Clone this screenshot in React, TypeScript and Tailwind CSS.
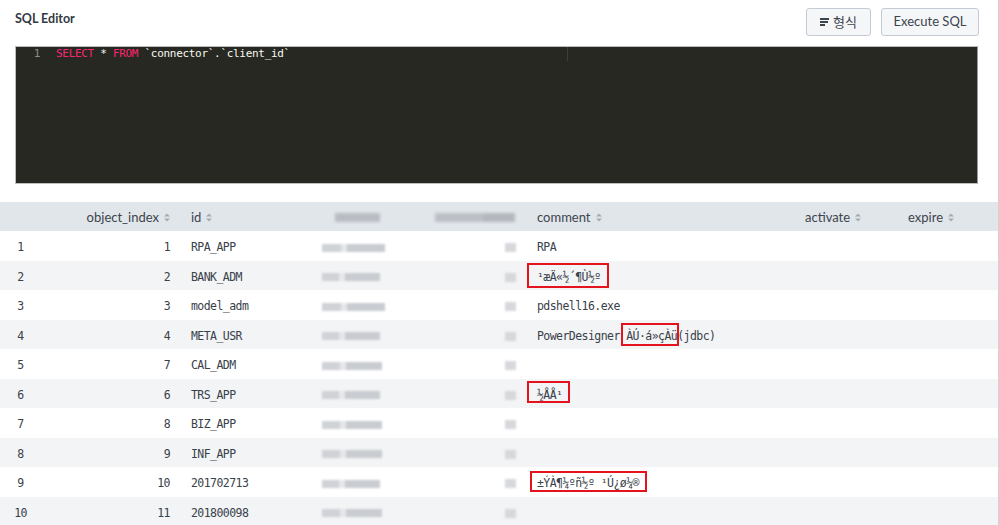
import React from "react";

const SortIcon = () => (
  <svg width="6" height="9" viewBox="0 0 6 9" className="inline-block ml-[5px] -mt-[1px]">
    <path d="M0 3.6 L3 0.4 L6 3.6 Z" fill="#a4abb3" />
    <path d="M0 5.4 L3 8.6 L6 5.4 Z" fill="#a4abb3" />
  </svg>
);

const FormatIcon = () => (
  <svg width="9" height="10" viewBox="0 0 9 10" className="mr-[4px]">
    <rect x="0" y="1" width="9" height="2" fill="#3c444d" />
    <rect x="0" y="4" width="8" height="2" fill="#3c444d" />
    <rect x="0" y="7" width="5" height="2" fill="#3c444d" />
  </svg>
);

type Row = { n: string; idx: string; id: string; comment: string };

const rows: Row[] = [
  { n: "1", idx: "1", id: "RPA_APP", comment: "RPA" },
  { n: "2", idx: "2", id: "BANK_ADM", comment: "¹æÄ«½´¶Ù½º" },
  { n: "3", idx: "3", id: "model_adm", comment: "pdshell16.exe" },
  { n: "4", idx: "4", id: "META_USR", comment: "PowerDesigner ÀÚ·á»çÀü(jdbc)" },
  { n: "5", idx: "7", id: "CAL_ADM", comment: "" },
  { n: "6", idx: "6", id: "TRS_APP", comment: "½ÅÅ¹" },
  { n: "7", idx: "8", id: "BIZ_APP", comment: "" },
  { n: "8", idx: "9", id: "INF_APP", comment: "" },
  { n: "9", idx: "10", id: "201702713", comment: "±ÝÀ¶¼ºñ½º ¹Ú¿ø¼®" },
  { n: "10", idx: "11", id: "201800098", comment: "" },
];

const blurWidths = [63, 58, 63, 58, 60, 58, 60, 60, 58, 60];

const BlurWide = ({ w }: { w: number }) => (
  <div className="flex items-center blur-[1.2px]" style={{ width: w }}>
    <div className="h-[8px] flex-1 bg-[#cfd2d6]" />
    <div className="h-[8px] w-[6px] bg-[#e6e7e9]" />
    <div className="h-[8px] flex-[2] bg-[#c9ccd0]" />
  </div>
);

const grid = "grid grid-cols-[42px_138px_130px_90px_127px_268px_103px_100px]";

export default function App() {
  const mono = { fontFamily: '"DejaVu Sans Mono", monospace' };
  return (
    <div
      className="relative w-[999px] h-[525px] overflow-hidden bg-white border-r border-[#d2d2d2] text-[#3c444d]"
      style={{ fontFamily: 'Lato, "Noto Sans CJK KR", sans-serif' }}
    >
      <div className="flex items-start justify-between pl-[15px] pr-[19px] pt-[8px]">
        <div className="pt-[2px] text-[12.5px] font-bold text-[#333a41]">SQL Editor</div>
        <div className="flex gap-[10px]">
          <button className="flex h-[28px] w-[65px] items-center justify-center rounded-[3px] border border-[#c3cbd4] bg-[#f5f6f8] text-[13px] text-[#3c444d]">
            <FormatIcon />
            <span style={{ fontFamily: '"Noto Sans CJK KR", sans-serif' }}>형식</span>
          </button>
          <button className="flex h-[28px] w-[98px] items-center justify-center rounded-[3px] border border-[#c3cbd4] bg-[#f5f6f8] text-[13px] text-[#3c444d]">
            Execute SQL
          </button>
        </div>
      </div>

      <div className="mx-[15px] mr-[20px] mt-[10px] h-[138px] border border-[#bdbdbd] border-r-[#9a9a9a] bg-[#272822]">
        <div
          className="relative flex h-[14px] items-center text-[11px] tracking-[-0.3px] leading-[14px]"
          style={mono}
        >
          <div className="w-[24px] text-right text-[#8f908a]">1</div>
          <div className="pl-[16px] whitespace-pre">
            <span className="text-[#f92672]">SELECT</span>
            <span className="text-[#f8f8f2]"> * </span>
            <span className="text-[#f92672]">FROM</span>
            <span className="text-[#f8f8f2]"> `connector`.`client_id`</span>
          </div>
          <div className="absolute left-[551px] top-0 h-[14px] w-[1px] bg-[#3d3e37]" />
        </div>
      </div>

      <div className="mt-[18px]">
        <div className={`${grid} h-[29px] items-center bg-[#e1e6eb] pt-[2px] text-[13px] text-[#3c444d]`}>
          <div />
          <div className="pr-[10px] text-right">
            object_index
            <SortIcon />
          </div>
          <div className="pl-[11px]">
            id
            <SortIcon />
          </div>
          <div className="pl-[25px]">
            <div className="h-[9px] w-[45px] bg-[#b9bdc3] blur-[1.5px]" />
          </div>
          <div className="pl-[35px]">
            <div className="flex h-[9px] w-[80px] blur-[1.5px]">
              <div className="flex-[3] bg-[#bcc0c6]" />
              <div className="flex-[2] bg-[#b4b8be]" />
            </div>
          </div>
          <div className="pl-[10px]">
            comment
            <SortIcon />
          </div>
          <div className="pl-[10px]">
            activate
            <SortIcon />
          </div>
          <div className="pl-[10px]">
            expire
            <SortIcon />
          </div>
        </div>

        {rows.map((r, i) => (
          <div
            key={r.n}
            className={`${grid} h-[29.5px] items-center pt-[4px] text-[11.5px] tracking-[-0.55px] text-[#39414a] ${
              i % 2 === 1 ? "bg-[#f2f4f5]" : "bg-white"
            }`}
            style={mono}
          >
            <div className="text-center pr-[1px]">{r.n}</div>
            <div className="pr-[10px] text-right">{r.idx}</div>
            <div className="pl-[11px]">{r.id}</div>
            <div className="pl-[12px]">
              <BlurWide w={blurWidths[i]} />
            </div>
            <div className="flex justify-end pr-[11px]">
              <div className="h-[9px] w-[11px] bg-[#d6d8db] blur-[1px]" />
            </div>
            <div className="pl-[10px] whitespace-pre">{r.comment}</div>
            <div />
            <div />
          </div>
        ))}
      </div>

      <div className="absolute left-[527px] top-[263px] h-[25px] w-[82px] border-2 border-[#e5131d]" />
      <div className="absolute left-[621px] top-[323px] h-[23px] w-[58px] border-2 border-[#e5131d]" />
      <div className="absolute left-[527px] top-[381px] h-[22px] w-[43px] border-2 border-[#e5131d]" />
      <div className="absolute left-[530px] top-[471px] h-[21px] w-[117px] border-2 border-[#e5131d]" />
    </div>
  );
}
